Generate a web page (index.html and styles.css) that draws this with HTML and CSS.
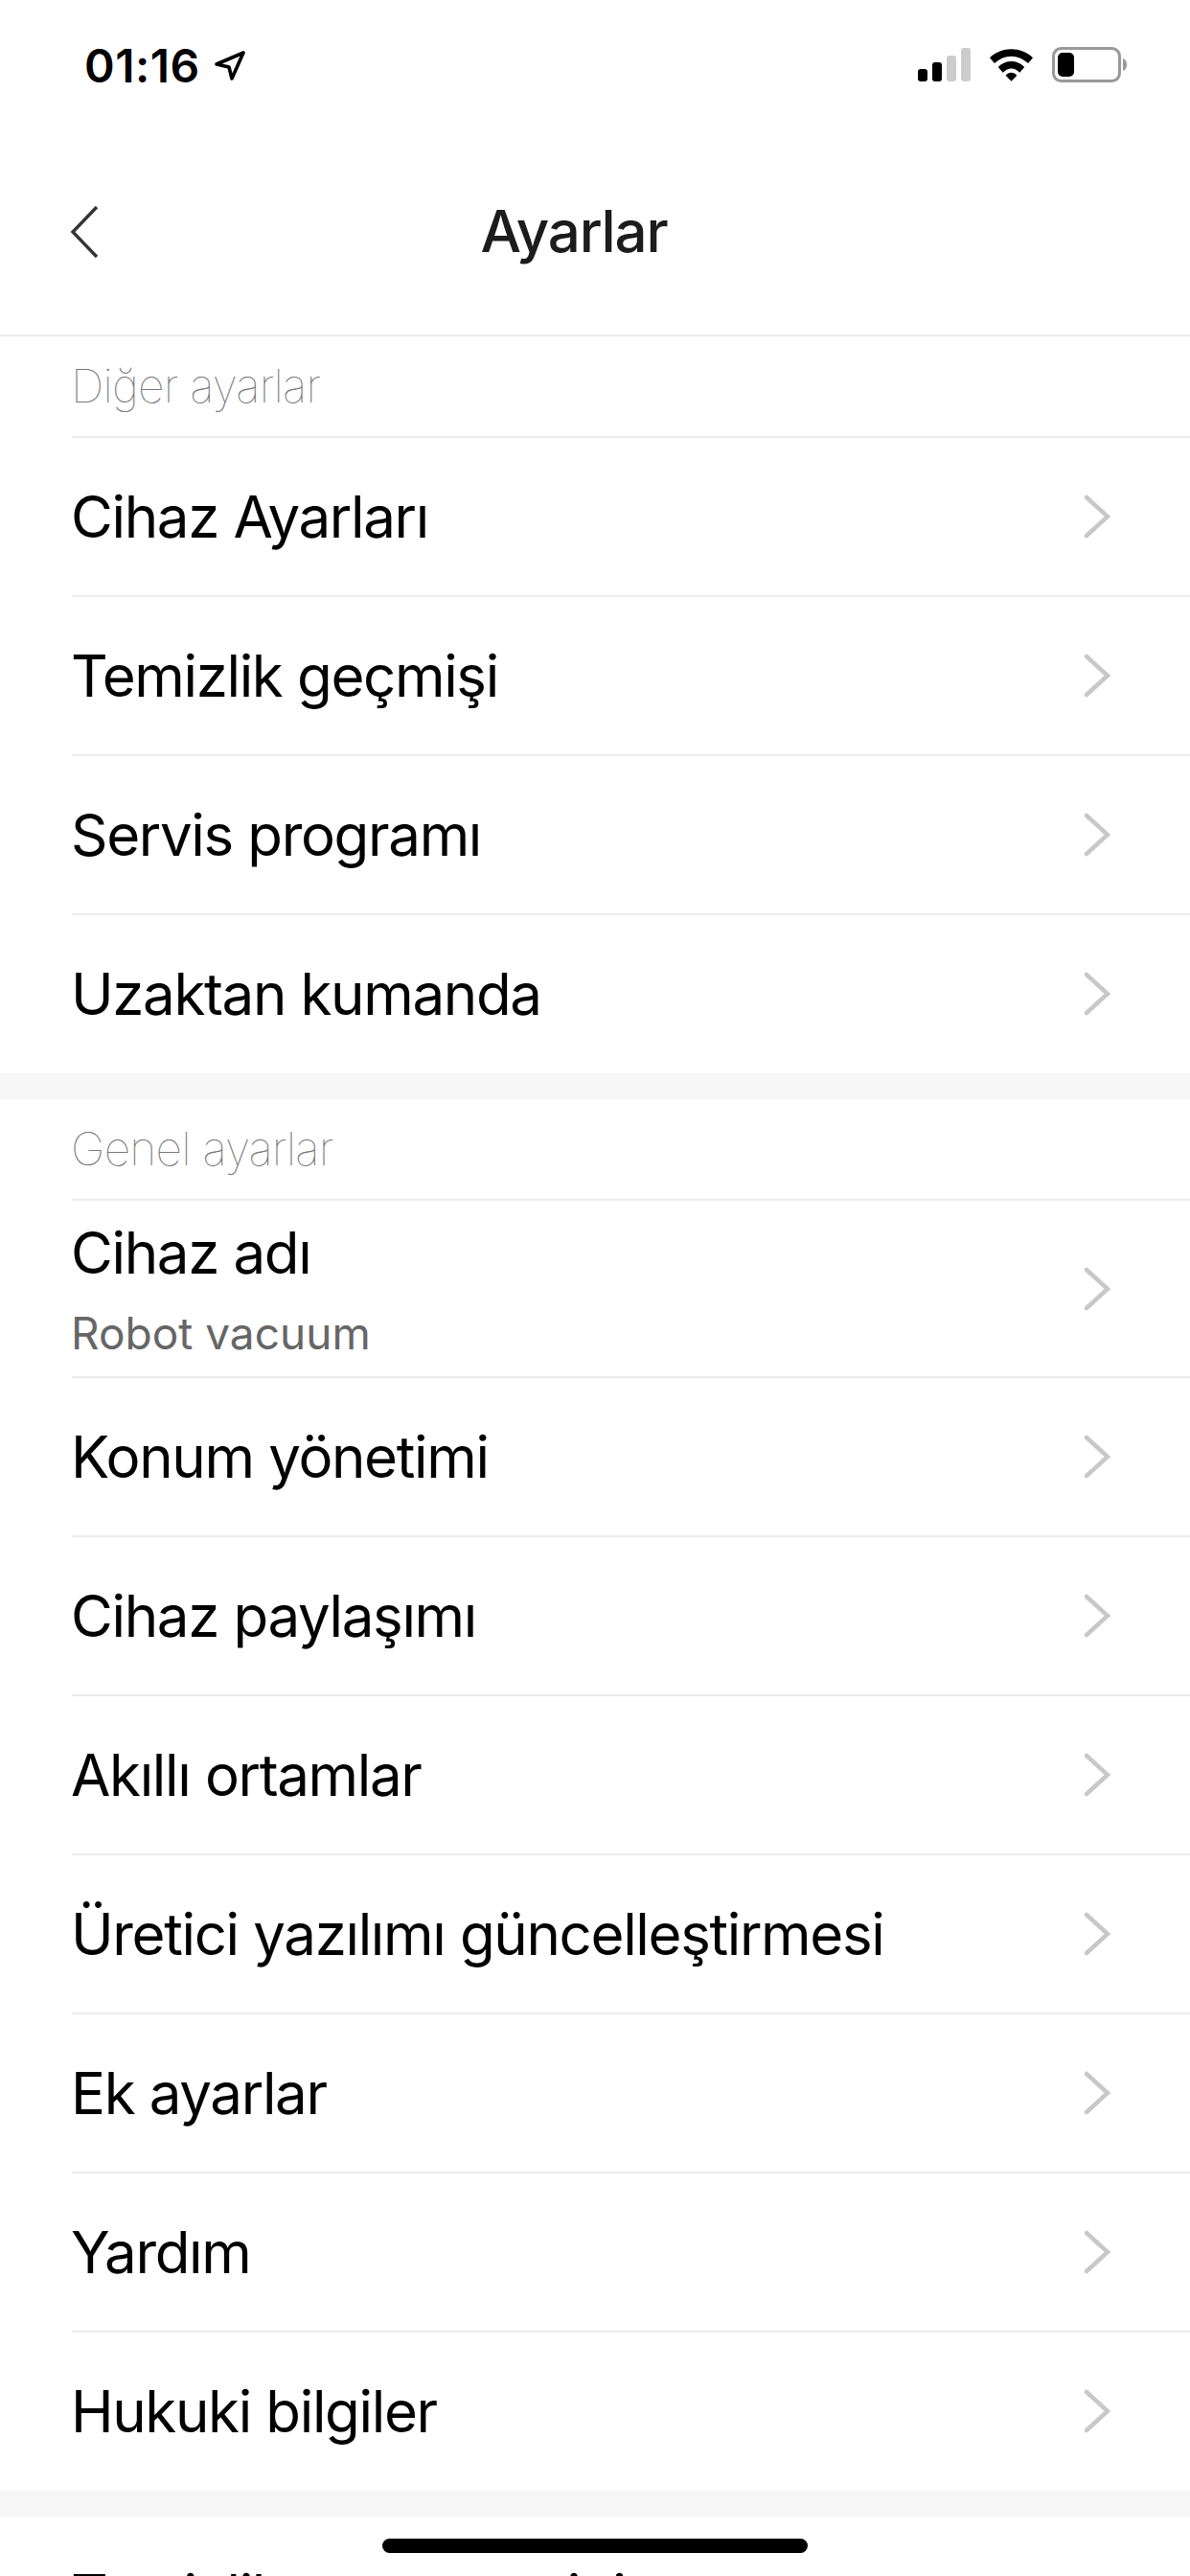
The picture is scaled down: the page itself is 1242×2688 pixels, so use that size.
FILE: index.html
```html
<!DOCTYPE html>
<html lang="tr">
<head>
<meta charset="utf-8">
<title>Ayarlar</title>
<link rel="stylesheet" href="styles.css">
</head>
<body>
<div class="screen">
  <header class="status">
    <div class="clock">
      <span>01:16</span>
      <svg class="loc" width="34" height="34" viewBox="0 0 34 34"><path d="M3 15 L31 3 L19 30 L16 18 Z" fill="none" stroke="#000" stroke-width="3.6" stroke-linejoin="round"/></svg>
    </div>
    <div class="indicators">
      <svg width="55" height="36" viewBox="0 0 55 36"><rect x="0" y="22" width="10" height="13" rx="3" fill="#000"/><rect x="15" y="15" width="10" height="20" rx="3" fill="#000"/><rect x="30" y="8" width="10" height="27" rx="3" fill="#ccc"/><rect x="45" y="0" width="10" height="35" rx="3" fill="#ccc"/></svg>
      <svg width="47" height="36" viewBox="0 0 48 36"><path d="M1 10 C14 -2 34 -2 47 10 L42 16 C31 6 17 6 6 16 Z M10 20 C18 12 30 12 38 20 L33 26 C27 20 21 20 15 26 Z M18 29 C21 25 27 25 30 29 L24 35 Z" fill="#000"/></svg>
      <svg width="79" height="37" viewBox="0 0 79 37"><rect x="1.500" y="1.500" width="69" height="34" rx="8" fill="none" stroke="#999" stroke-width="3"/><rect x="6" y="6" width="17" height="25" rx="5" fill="#000"/><path d="M74 12 C77 13 78 16 78 18.500 C78 21 77 24 74 25 Z" fill="#999"/></svg>
    </div>
  </header>
  <nav class="nav">
    <svg class="back" width="34" height="60" viewBox="0 0 34 60"><path d="M30 4 L5 30 L30 56" fill="none" stroke="#333" stroke-width="3.4"/></svg>
    <h1 class="title">Ayarlar</h1>
  </nav>
  <main>
    <section class="group">
      <h2 class="group-label">Diğer ayarlar</h2>
      <a class="row"><span class="row-name">Cihaz Ayarları</span><svg class="chev" width="28" height="46" viewBox="0 0 28 46"><path d="M3 3 L25 23 L3 43" /></svg></a>
      <a class="row"><span class="row-name">Temizlik geçmişi</span><svg class="chev" width="28" height="46" viewBox="0 0 28 46"><path d="M3 3 L25 23 L3 43" /></svg></a>
      <a class="row"><span class="row-name">Servis programı</span><svg class="chev" width="28" height="46" viewBox="0 0 28 46"><path d="M3 3 L25 23 L3 43" /></svg></a>
      <a class="row"><span class="row-name">Uzaktan kumanda</span><svg class="chev" width="28" height="46" viewBox="0 0 28 46"><path d="M3 3 L25 23 L3 43" /></svg></a>
    </section>
    <section class="group">
      <h2 class="group-label">Genel ayarlar</h2>
      <a class="row row-tall"><span class="row-text"><span class="row-name">Cihaz adı</span><span class="row-sub">Robot vacuum</span></span><svg class="chev" width="28" height="46" viewBox="0 0 28 46"><path d="M3 3 L25 23 L3 43" /></svg></a>
      <a class="row"><span class="row-name">Konum yönetimi</span><svg class="chev" width="28" height="46" viewBox="0 0 28 46"><path d="M3 3 L25 23 L3 43" /></svg></a>
      <a class="row"><span class="row-name">Cihaz paylaşımı</span><svg class="chev" width="28" height="46" viewBox="0 0 28 46"><path d="M3 3 L25 23 L3 43" /></svg></a>
      <a class="row"><span class="row-name">Akıllı ortamlar</span><svg class="chev" width="28" height="46" viewBox="0 0 28 46"><path d="M3 3 L25 23 L3 43" /></svg></a>
      <a class="row"><span class="row-name">Üretici yazılımı güncelleştirmesi</span><svg class="chev" width="28" height="46" viewBox="0 0 28 46"><path d="M3 3 L25 23 L3 43" /></svg></a>
      <a class="row"><span class="row-name">Ek ayarlar</span><svg class="chev" width="28" height="46" viewBox="0 0 28 46"><path d="M3 3 L25 23 L3 43" /></svg></a>
      <a class="row"><span class="row-name">Yardım</span><svg class="chev" width="28" height="46" viewBox="0 0 28 46"><path d="M3 3 L25 23 L3 43" /></svg></a>
      <a class="row"><span class="row-name">Hukuki bilgiler</span><svg class="chev" width="28" height="46" viewBox="0 0 28 46"><path d="M3 3 L25 23 L3 43" /></svg></a>
    </section>
    <section class="group">
      <a class="row"><span class="row-name">Temizlik ortamı sesini</span></a>
    </section>
  </main>
  <div class="home-bar"></div>
</div>
</body>
</html>
```
FILE: styles.css
```css
* { box-sizing: border-box; margin: 0; padding: 0; }
html, body { background: #fff; }
body { font-family: Inter, "Liberation Sans", sans-serif; color: #000; }
.screen { position: relative; width: 1242px; height: 2688px; overflow: hidden; background: #fff; }

.status { height: 132px; padding: 44px 65px 0 88px; display: flex; justify-content: space-between; align-items: flex-start; }
.clock { display: flex; align-items: center; gap: 14px; font-size: 48px; font-weight: 600; line-height: 50px; letter-spacing: 0.5px; }
.indicators { display: flex; align-items: center; gap: 19px; padding-top: 5px; }

.nav { position: relative; height: 219px; border-bottom: 2px solid #ececec; display: flex; align-items: center; justify-content: center; padding-right: 44px; }
.back { position: absolute; left: 71px; top: 80px; }
.title { font-size: 60px; font-weight: 500; letter-spacing: -1.2px; color: #1c1c1c; }

.group { background: #fff; border-bottom: 27px solid #f6f6f6; }
.group-label { margin-left: 74px; height: 106px; padding-bottom: 3px; display: flex; align-items: center; font-size: 48px; font-weight: 100; letter-spacing: -0.8px; color: #777; position: relative; }
.group-label::after { content: ""; position: absolute; left: 1px; right: 0; bottom: 0; height: 2px; background: #ececec; }
.row { margin-left: 75px; padding-right: 83px; height: 166px; display: flex; align-items: center; justify-content: space-between; border-bottom: 2px solid #ececec; }
.row:last-child { border-bottom: 0; height: 165px; padding-bottom: 1px; }
.row-tall { height: 185px; }
.row-text { display: flex; flex-direction: column; gap: 22px; padding-top: 2px; }
.row-name { margin-left: -1px; font-size: 60px; font-weight: 400; line-height: 68px; letter-spacing: -1.35px; }
.row-sub { margin-left: -1px; font-size: 46px; line-height: 56px; color: #666; }
.chev { fill: none; stroke: #c8c8c8; stroke-width: 4.5; stroke-linecap: round; }

.home-bar { position: absolute; left: 399px; top: 2649px; width: 444px; height: 15px; border-radius: 8px; background: #000; }
```
